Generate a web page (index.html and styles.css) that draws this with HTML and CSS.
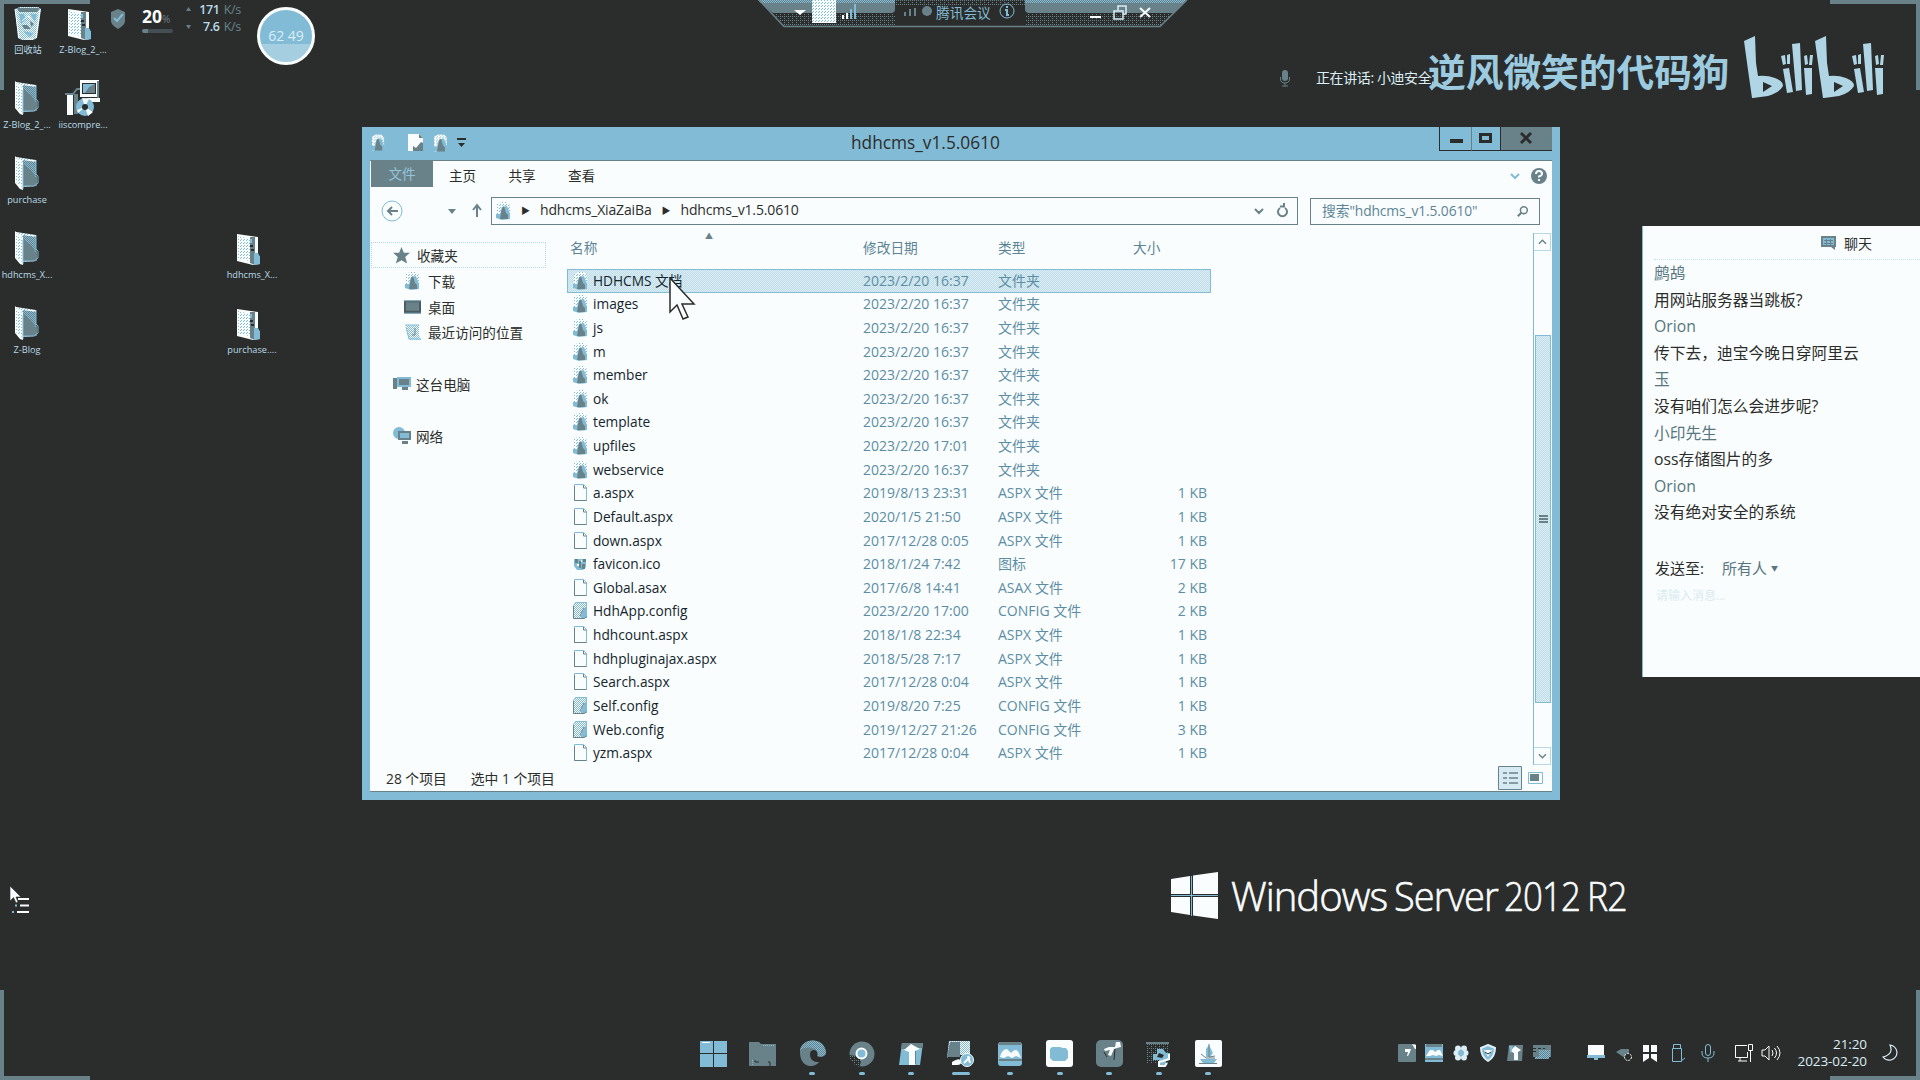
FILE: index.html
```html
<!DOCTYPE html>
<html lang="zh-CN">
<head>
<meta charset="utf-8">
<title>hdhcms_v1.5.0610</title>
<link rel="stylesheet" href="styles.css">
</head>
<body>
<svg width="0" height="0" class="defs">
  <defs>
    <pattern id="dots" width="2" height="2" patternUnits="userSpaceOnUse"><path fill="#82bbd5" d="M0 0h2v2H0z"/><path fill="#fafdfd" d="M0 0h1v1H0zM1 1h1v1H1z"/></pattern>
    <pattern id="light" width="3" height="3" patternUnits="userSpaceOnUse"><path fill="#fafdfd" d="M0 0h3v3H0z"/><path fill="#82bbd5" d="M0 0h1v1H0zM1 2h1v1H1z"/></pattern>
    <pattern id="deep" width="2" height="2" patternUnits="userSpaceOnUse"><path fill="#69828a" d="M0 0h2v2H0z"/><path fill="#82bbd5" d="M0 0h1v1H0zM1 1h1v1H1z"/></pattern>
    <pattern id="haze" width="4" height="4" patternUnits="userSpaceOnUse"><path fill="#2b2d2c" d="M0 0h4v4H0z"/><path fill="#69828a" d="M0 0h1v1H0zM2 2h1v1H2zM2 0h1v1H2z"/></pattern>
  </defs>
  <symbol id="folder" viewBox="0 0 24 34">
    <path fill="url(#light)" d="M1 1l20 3v26l-14 1-6-5z"/>
    <path fill="#69828a" d="M8 8q8 0 11 8l3 4v10H8z"/><path fill="url(#deep)" d="M8 4l13 2v16l-5-8-8-6z"/>
    <path fill="#fafdfd" d="M0 0l8 8v26l-3-1-5-6z"/><path fill="url(#light)" d="M1 2l6 7v22l-6-5z"/>
    <path fill="none" stroke="#82bbd5" d="M8 33V9M8 30h11l4-3v-7l-2-2V4"/>
  </symbol>
  <symbol id="zip" viewBox="0 0 24 32">
    <path fill="#fafdfd" d="M0 0l21 3v17l2 3v7l-7 1L0 27z"/><path fill="url(#light)" d="M1 2l12 3v22L1 25z"/>
    <path fill="#69828a" d="M13 3h5v28l-5-2z"/><path fill="#82bbd5" d="M17 19h4l2 4v7l-6 1zM13 5h2v4h-2z"/><path fill="#2b2d2c" d="M13 11h3v2h-3zM14 15h3v2h-3z"/>
  </symbol>
  <symbol id="fold" viewBox="0 0 15 18">
    <path fill="url(#light)" d="M1 2l4-2h6l3 3v11l-3 3H1z"/><path fill="#82bbd5" d="M0 12h4l2-7 5-1 3 8v5l-8 1-6-2z"/>
    <path fill="#69828a" d="M4 17l2-11 2-2 2 7 2 2v4z"/>
  </symbol>
  <symbol id="page" viewBox="0 0 15 18">
    <path fill="#fafdfd" stroke="#82bbd5" d="M1.500 .5h9l3 3v13h-12z"/><path fill="none" stroke="#69828a" d="M1.500 2v14.500h12M10.500 1v3h3"/>
  </symbol>
  <symbol id="conf" viewBox="0 0 15 18">
    <path fill="url(#dots)" stroke="#82bbd5" d="M2.500 .5h11v14l-2 2h-11v-13z"/><path fill="#82bbd5" d="M8 14l4-9h2v11H8z"/><path fill="none" stroke="#69828a" d="M.5 4v12.500h11l2-2M7 14l4-8"/>
  </symbol>
</svg>

<main class="desktop">
  <i class="corner tl"></i><i class="corner tr"></i><i class="corner bl"></i><i class="corner br"></i>

  <figure class="shortcut bin"><svg width="28" height="34" viewBox="0 0 28 34"><path fill="url(#dots)" d="M1 2l5-2h18l3 2-4 29-4 2H8l-4-2z"/><path fill="#69828a" d="M3 1h23l-3 4H5zM8 18h5l4 4h-7zM16 14l4 3-3 3z"/><path fill="#82bbd5" d="M5 7h5l2 6-5 4zM16 7h7l-2 8zM9 24l10 2-3 4z"/><path stroke="#fafdfd" fill="none" d="M1 2l4 29M26 3l-4 28M8 14l6-5 4 5M11 32h8"/></svg><figcaption>回收站</figcaption></figure>
  <figure class="shortcut s2"><svg width="24" height="32"><use href="#zip"/></svg><figcaption>Z-Blog_2_...</figcaption></figure>
  <figure class="shortcut s3"><svg width="24" height="34"><use href="#folder"/></svg><figcaption>Z-Blog_2_...</figcaption></figure>
  <figure class="shortcut s4"><svg width="36" height="37" viewBox="0 0 36 37"><path fill="#fafdfd" d="M15 0h19v17H15zM2 15h6v20H2zM20 18h15v4H22z"/><path fill="#2b2d2c" d="M17 3h14v11H17z"/><path fill="#82bbd5" d="M18 4h12v9H18z"/><path fill="#69828a" d="M24 7l6-3v9H20zM32 1h2v17h-2zM9 14h4v20H9z"/><path fill="none" stroke="#69828a" stroke-width="2" d="M0 14h8l4-5h3"/><circle cx="20" cy="27" r="9" fill="#82bbd5"/><path fill="#fafdfd" d="M20 27l-3-9 7 1zM20 27l8 5-5 4zM20 27l-8 3 1 3z"/><circle cx="20" cy="27" r="3" fill="#2b2d2c"/></svg><figcaption>iiscompre...</figcaption></figure>
  <figure class="shortcut s5"><svg width="24" height="34"><use href="#folder"/></svg><figcaption>purchase</figcaption></figure>
  <figure class="shortcut s6"><svg width="24" height="34"><use href="#folder"/></svg><figcaption>hdhcms_X...</figcaption></figure>
  <figure class="shortcut s7"><svg width="24" height="34"><use href="#folder"/></svg><figcaption>Z-Blog</figcaption></figure>
  <figure class="shortcut s8"><svg width="24" height="32"><use href="#zip"/></svg><figcaption>hdhcms_X...</figcaption></figure>
  <figure class="shortcut s9"><svg width="24" height="32"><use href="#zip"/></svg><figcaption>purchase....</figcaption></figure>

  <section class="monitor">
    <svg width="16" height="20" viewBox="0 0 16 20"><path fill="#69828a" d="M8 0l7 3v9q0 4-7 8-7-4-7-8V3z"/><path fill="none" stroke="#82bbd5" stroke-width="2" d="M4 9l3 3 6-7"/></svg>
    <div class="cpu"><p><b>20</b><small>%</small></p><i></i></div>
    <div class="net"><p><i>▲</i><b>171</b> <span>K/s</span></p><p><i>▼</i><b>7.6</b> <span>K/s</span></p></div>
    <div class="ball">62 49</div>
  </section>

  <header class="meeting">
    <svg width="430" height="28" viewBox="0 0 430 28">
      <path fill="#69828a" d="M0 0h137v9q0 4-4 4H15zM267 0h162l-13 13H271q-4 0-4-4z"/>
      <path fill="url(#deep)" d="M0 0h137v3H3zM267 0h162l-3 3H267z"/>
      <path fill="url(#haze)" d="M15 13h123v12H26zM267 13h149l-13 12H267zM138 0h129v6H138z"/>
      <path fill="none" stroke="#69828a" stroke-width="1.500" d="M1 0l25 26.500h376L429 0"/>
      <path fill="#fafdfd" d="M36 10h12l-6 5z"/><path fill="url(#light)" d="M54 0h24v23H54z"/>
      <path stroke="#fafdfd" stroke-width="2" d="M85 19v-4M89 19v-6"/><path stroke="#82bbd5" stroke-width="2" d="M93 19V9M97 19V4"/>
      <path stroke="#69828a" stroke-width="2" d="M147 16v-4M152 16V9M157 16V8"/><circle cx="169" cy="11" r="5" fill="#69828a"/>
      <circle cx="249" cy="11" r="7" fill="none" stroke="#82bbd5"/><path fill="none" stroke="#82bbd5" stroke-width="2" d="M249 6v2M247 10h2v5h2"/>
      <path stroke="#fafdfd" stroke-width="2" fill="none" d="M332 17h11M382 8l10 9M392 8l-10 9"/><path stroke="#dceef5" stroke-width="1.500" fill="none" d="M356 11h9v8h-9zM360 10V6h8v8h-3"/>
    </svg><span>腾讯会议</span>
  </header>

  <p class="speaking"><svg width="10" height="17" viewBox="0 0 10 17"><rect x="2" width="6" height="11" rx="3" fill="#69828a"/><path fill="none" stroke="#69828a" d="M.5 7v2q0 4 4.500 4t4.500-4V7M5 13v3M2 16h6"/></svg>正在讲话: 小迪安全;</p>
  <p class="watermark">逆风微笑的代码狗</p>
  <svg class="bili" width="142" height="62" viewBox="0 0 142 62">
    <g id="half" fill="#b0d5e4">
      <path fill-rule="evenodd" d="M0 5L11 0l1 27 2 13q9-1 17 2 8 3 8 8-4 7-15 10l-15 2H8L4 34zM19 46v10l9-6z"/>
      <path d="M48 8l8-1 2 47-6 1zM37 20l4-1 1 9-3 1zM43 19l3-1 0 10-3 0zM60 20l3-1 1 9-3 1zM66 19l3 0-1 10-3 0zM39 33l6-1 4 24-6 1zM60 32h8l0 26-6 1z"/>
    </g><use href="#half" x="71"/>
  </svg>

  <section class="window">
    <header class="titlebar">
      <div class="quick"><svg width="14" height="18"><use href="#fold"/></svg><svg width="16" height="18" viewBox="0 0 16 18"><path fill="#fafdfd" d="M0 0h11l4 4v6l-3 7H0z"/><path fill="#69828a" d="M5 12l3 2 5-6 2 1v8H5zM11 0v4h4z"/></svg><svg width="15" height="19"><use href="#fold"/></svg><svg width="9" height="10" viewBox="0 0 9 10"><path fill="#2b2d2c" d="M0 0h9v2H0zM1 5h7L4.500 9z"/></svg></div>
      <h1>hdhcms_v1.5.0610</h1>
      <div class="controls"><span class="min"><svg width="32" height="23"><path fill="#2b2d2c" d="M10 12h13v4H10z"/></svg></span><span class="max"><svg width="28" height="23"><path fill="none" stroke="#2b2d2c" stroke-width="3" d="M8.500 7.500h10v7h-10z"/></svg></span><span class="close"><svg width="52" height="23"><path stroke="#2b2d2c" stroke-width="3" d="M20 6l10 10M30 6L20 16"/></svg></span></div>
    </header>
    <div class="client">
      <nav class="ribbon"><b>文件</b><span>主页</span><span>共享</span><span>查看</span><svg width="46" height="18" viewBox="0 0 46 18"><path fill="none" stroke="#82bbd5" stroke-width="2" d="M9 7l4 4 4-4"/><circle cx="37" cy="9" r="8" fill="#69828a"/><path fill="none" stroke="#fafdfd" stroke-width="2" d="M34 7q0-3 3-3t3 2.500q0 2-3 3v1M37 12v2"/></svg></nav>
      <div class="navbar">
        <svg class="navs" width="109" height="28" viewBox="0 0 109 28"><circle cx="11" cy="14" r="10" fill="none" stroke="#82bbd5"/><path fill="none" stroke="#69828a" stroke-width="2" d="M17 14H7M11 10l-4 4 4 4"/><path fill="#69828a" d="M67 12h8l-4 5z"/><path fill="none" stroke="#69828a" stroke-width="2" d="M96 20V9M92 13l4-5 4 5"/></svg>
        <div class="address"><svg width="15" height="20"><use href="#fold"/></svg><i>▶</i><span>hdhcms_XiaZaiBa</span><i>▶</i><span>hdhcms_v1.5.0610</span><svg class="refresh" width="40" height="18" viewBox="0 0 40 18"><path fill="none" stroke="#69828a" stroke-width="2" d="M3 7l4 4 4-4M33 6a4.500 4.500 0 1 1-5 0M28 4.500h4V1"/></svg></div>
        <div class="search"><span>搜索"hdhcms_v1.5.0610"</span><svg width="12" height="13" viewBox="0 0 14 14"><circle cx="8" cy="5.500" r="4" fill="none" stroke="#69828a" stroke-width="1.800"/><path stroke="#69828a" stroke-width="2.500" d="M5 8.500l-4 4"/></svg></div>
      </div>
      <div class="body">
        <aside class="tree">
          <p class="root hot"><svg width="17" height="17" viewBox="0 0 18 18"><path fill="#69828a" d="M9 0l2.500 6H18l-5 4.500 2 7L9 14l-6 3.500 2-7L0 6h6.500z"/></svg>收藏夹</p>
          <p><svg width="17" height="18"><use href="#fold"/></svg>下载</p>
          <p><svg width="17" height="14" viewBox="0 0 18 14"><path fill="#4a5a5f" d="M0 0h18v14H0z"/><path fill="#69828a" d="M2 2h14v9H2z"/><path fill="#82bbd5" d="M0 0h18v1H0zM0 13h18v1H0z"/></svg>桌面</p>
          <p><svg width="17" height="17" viewBox="0 0 17 17"><path fill="url(#dots)" d="M2 1h13v10l2 5H5L3 8z"/><path fill="none" stroke="#82bbd5" d="M1 1h14M2 3l3 12h12"/><path fill="none" stroke="#69828a" d="M11 4v7H8"/></svg>最近访问的位置</p>
          <p class="root gap"><svg width="18" height="16" viewBox="0 0 18 16"><path fill="#82bbd5" d="M4 1h14v10H4z"/><path fill="#69828a" d="M6 3h10v6H6zM9 11h6v3H9zM0 2h4v11H0z"/></svg>这台电脑</p>
          <p class="root gap"><svg width="18" height="18" viewBox="0 0 18 18"><circle cx="6" cy="6" r="6" fill="#82bbd5"/><path fill="#69828a" d="M5 4h13v9H5zM9 14h6v3H9z"/><path fill="#82bbd5" d="M7 6h9v5H7z"/></svg>网络</p>
        </aside>
        <div class="list">
          <div class="head"><span>名称</span><span>修改日期</span><span>类型</span><span class="size">大小</span><i>▲</i></div>
          <div class="row on"><svg><use href="#fold"/></svg><b>HDHCMS 文档</b><span>2023/2/20 16:37</span><span>文件夹</span><em></em></div>
          <div class="row"><svg><use href="#fold"/></svg><b>images</b><span>2023/2/20 16:37</span><span>文件夹</span><em></em></div>
          <div class="row"><svg><use href="#fold"/></svg><b>js</b><span>2023/2/20 16:37</span><span>文件夹</span><em></em></div>
          <div class="row"><svg><use href="#fold"/></svg><b>m</b><span>2023/2/20 16:37</span><span>文件夹</span><em></em></div>
          <div class="row"><svg><use href="#fold"/></svg><b>member</b><span>2023/2/20 16:37</span><span>文件夹</span><em></em></div>
          <div class="row"><svg><use href="#fold"/></svg><b>ok</b><span>2023/2/20 16:37</span><span>文件夹</span><em></em></div>
          <div class="row"><svg><use href="#fold"/></svg><b>template</b><span>2023/2/20 16:37</span><span>文件夹</span><em></em></div>
          <div class="row"><svg><use href="#fold"/></svg><b>upfiles</b><span>2023/2/20 17:01</span><span>文件夹</span><em></em></div>
          <div class="row"><svg><use href="#fold"/></svg><b>webservice</b><span>2023/2/20 16:37</span><span>文件夹</span><em></em></div>
          <div class="row"><svg><use href="#page"/></svg><b>a.aspx</b><span>2019/8/13 23:31</span><span>ASPX 文件</span><em>1 KB</em></div>
          <div class="row"><svg><use href="#page"/></svg><b>Default.aspx</b><span>2020/1/5 21:50</span><span>ASPX 文件</span><em>1 KB</em></div>
          <div class="row"><svg><use href="#page"/></svg><b>down.aspx</b><span>2017/12/28 0:05</span><span>ASPX 文件</span><em>1 KB</em></div>
          <div class="row"><svg viewBox="0 0 15 18"><path fill="#82bbd5" d="M1 4h12v8l-3 3H4l-3-4z"/><path fill="#69828a" d="M2 4h3v4H2zM6 6h2v7H6zM10 4h3v3h-3zM9 9h3v5H9z"/><path fill="#fafdfd" d="M4 9h2v2H4zM8 5h1v2H8z"/></svg><b>favicon.ico</b><span>2018/1/24 7:42</span><span>图标</span><em>17 KB</em></div>
          <div class="row"><svg><use href="#page"/></svg><b>Global.asax</b><span>2017/6/8 14:41</span><span>ASAX 文件</span><em>2 KB</em></div>
          <div class="row"><svg><use href="#conf"/></svg><b>HdhApp.config</b><span>2023/2/20 17:00</span><span>CONFIG 文件</span><em>2 KB</em></div>
          <div class="row"><svg><use href="#page"/></svg><b>hdhcount.aspx</b><span>2018/1/8 22:34</span><span>ASPX 文件</span><em>1 KB</em></div>
          <div class="row"><svg><use href="#page"/></svg><b>hdhpluginajax.aspx</b><span>2018/5/28 7:17</span><span>ASPX 文件</span><em>1 KB</em></div>
          <div class="row"><svg><use href="#page"/></svg><b>Search.aspx</b><span>2017/12/28 0:04</span><span>ASPX 文件</span><em>1 KB</em></div>
          <div class="row"><svg><use href="#conf"/></svg><b>Self.config</b><span>2019/8/20 7:25</span><span>CONFIG 文件</span><em>1 KB</em></div>
          <div class="row"><svg><use href="#conf"/></svg><b>Web.config</b><span>2019/12/27 21:26</span><span>CONFIG 文件</span><em>3 KB</em></div>
          <div class="row"><svg><use href="#page"/></svg><b>yzm.aspx</b><span>2017/12/28 0:04</span><span>ASPX 文件</span><em>1 KB</em></div>
        </div>
        <div class="scroll"><svg width="17" height="18" viewBox="0 0 17 18"><path fill="none" stroke="#69828a" stroke-width="1.600" d="M5 11l4-4 4 4"/></svg><div class="track"><i><svg width="9" height="8" viewBox="0 0 9 8"><path fill="#69828a" d="M0 0h9v2H0zM0 3h9v2H0zM0 6h9v2H0z"/></svg></i></div><svg width="17" height="18" viewBox="0 0 17 18"><path fill="none" stroke="#69828a" stroke-width="1.600" d="M5 7l4 4 4-4"/></svg></div>
      </div>
      <footer class="status"><span>28 个项目</span><span>选中 1 个项目</span><svg width="46" height="24" viewBox="0 0 46 24"><path fill="#d5eaf2" stroke="#69828a" d="M.5 .5h23v23H.5z"/><path stroke="#69828a" stroke-width="1.500" stroke-dasharray="4 2 9" d="M5 7h15M5 12h15M5 17h15"/><path fill="none" stroke="#82bbd5" d="M30.500 6.500h14v11h-14z"/><path fill="#69828a" d="M32 8h9v7h-9z"/></svg></footer>
    </div>
  </section>
  <svg class="pointer" width="28" height="44" viewBox="0 0 28 44"><path fill="#fafdfd" stroke="#2b2d2c" stroke-width="1.500" d="M1 1v34l7-7 6 14 5-2-6-13h12z"/></svg>

  <aside class="chat">
    <h2><svg width="16" height="15" viewBox="0 0 16 15"><path fill="#69828a" d="M0 1h15v11h-1v3l-4-3H0z"/><path fill="#82bbd5" d="M2 3h11v7H2z"/><path stroke="#69828a" d="M3 5.500h9M3 8.500h9M5.500 4v6M9.500 4v6"/></svg>聊天</h2>
    <dl>
      <dt>鹧鸪</dt><dd>用网站服务器当跳板?</dd>
      <dt>Orion</dt><dd>传下去，迪宝今晚日穿阿里云</dd>
      <dt>玉</dt><dd>没有咱们怎么会进步呢?</dd>
      <dt>小印先生</dt><dd>oss存储图片的多</dd>
      <dt>Orion</dt><dd>没有绝对安全的系统</dd>
    </dl>
    <p class="to">发送至:<span>所有人<i>▼</i></span></p>
    <p class="hint">请输入消息...</p>
  </aside>

  <div class="brand"><svg width="48" height="48" viewBox="0 0 48 48"><path fill="#fafdfd" d="M0 7l19-3v18H0zM22 3.500L47 0v22H22zM0 25h19v18L0 40zM22 25h25v22l-25-3.500z"/><path fill="none" stroke="#82bbd5" d="M0 23.500h47M20.500 4v40"/></svg><span class="w1">Windows</span><span class="w2">Server</span><span class="w3">2012</span><span class="w4">R2</span></div>

  <svg class="edge" width="30" height="32" viewBox="0 0 30 32"><path stroke="#fafdfd" stroke-width="2" d="M8 13h11M10 19.500h9M7 26h12"/><path fill="#82bbd5" d="M5 18.500h2v2H5zM2 25h2v2H2z"/><path fill="#fafdfd" stroke="#2b2d2c" stroke-width=".6" d="M0 0v15l3.500-3.500L6 17l2-1-2-5h5z"/></svg>

  <footer class="dock">
    <span><svg viewBox="0 0 27 27"><path fill="#82bbd5" d="M0 1h13v12H0zM14 1h13v12H14zM0 14h13v13H0zM14 14h13v13H14z"/><path fill="#fafdfd" d="M2 2h8v1H2z"/></svg></span>
    <span><svg viewBox="0 0 27 27"><path fill="#69828a" d="M0 2h10l2 2h15v22H0z"/><path stroke="#82bbd5" stroke-dasharray="1 1" d="M14 5.500h12M3.500 20v6"/><path fill="none" stroke="#2b2d2c" d="M6 20v2h4M19 22h2v4"/></svg></span>
    <span><svg viewBox="0 0 27 27"><path fill="#69828a" d="M1 10C4-3 25-3 27 12c0 5-6 6-9 4 2-4-2-8-6-5-3 5 1 12 8 11-5 7-20 6-19-12z"/><path fill="url(#deep)" d="M1 10C4-3 25-3 27 12c0 4-4 5-8 4 1-8-9-11-18-6z"/></svg><i></i></span>
    <span><svg viewBox="0 0 27 27"><circle cx="14" cy="14" r="12.500" fill="#69828a"/><path fill="url(#haze)" d="M1 15l7 1 5 4-1 7Q3 25 1 15z"/><circle cx="13.500" cy="13.500" r="5" fill="#82bbd5" stroke="#fafdfd" stroke-width="2"/></svg><i></i></span>
    <span><svg viewBox="0 0 27 27"><path fill="#82bbd5" d="M4 3h21l-3 22H1z"/><path fill="#69828a" d="M4 3h21l-1 5h-6v16h-7V9H3z"/><path fill="#fafdfd" d="M13 4l9 5-5 2v14h-6V12l-5-2z"/></svg><i></i></span>
    <span><svg viewBox="0 0 27 27"><path fill="url(#dots)" d="M2 1h21v14H3L0 18z"/><path fill="#69828a" d="M3 2h10v15H0z"/><path fill="#fafdfd" d="M5 22q8-5 9-1t-4 4H5z"/><circle cx="20" cy="20" r="6.500" fill="#82bbd5" stroke="#fafdfd"/><path fill="none" stroke="#fafdfd" stroke-width="2" d="M17 23l6-6M23 23l-2-7"/></svg><i class="long"></i></span>
    <span><svg viewBox="0 0 27 27"><rect x="1" y="2" width="24" height="24" rx="3" fill="#82bbd5"/><path fill="#69828a" d="M2 2h22v3H2zM2 19h23v2H2z"/><path fill="#fafdfd" d="M3 17q2-8 7-8l4 4q5-6 8 0l2 5-5-2-4 2-4-2-4 2z"/></svg><i></i></span>
    <span><svg viewBox="0 0 27 27"><rect width="27" height="27" rx="3" fill="#fafdfd"/><path fill="#82bbd5" d="M6 7h8l3 1h3l2 3v7l-3 3H7l-3-3V9z"/></svg><i></i></span>
    <span><svg viewBox="0 0 27 27"><rect width="27" height="27" rx="5" fill="#69828a"/><path fill="#fafdfd" d="M8 9l5-2h6l1-5h4l1 5-4 1-3 1-3 7-3-1 2-5-5 1z"/><path fill="none" stroke="#2b2d2c" d="M8 12l3 5M19 9l-1 11"/></svg><i></i></span>
    <span><svg viewBox="0 0 27 27"><path fill="url(#haze)" d="M1 2h23v21H1z"/><path fill="#69828a" d="M1 2h23v2H1z"/><path fill="#82bbd5" d="M12 9h6l3 4h4v7l-4 1v5h-7v-6H8v-6h4z"/><path fill="none" stroke="#fafdfd" stroke-width="2" d="M24 14v5l-6 2-4 1v4h6l2-3"/><path fill="#2b2d2c" d="M14 13l5 2-2 3-5-1z"/></svg><i></i></span>
    <span><svg viewBox="0 0 27 27"><rect width="27" height="27" rx="2" fill="#fafdfd"/><path fill="#82bbd5" d="M14 5l4 8-3 4h-4V9zM5 19h17l-3 4H8z"/><path fill="none" stroke="#69828a" d="M14 4v13l6-1M6 14l5 4h9M4 23.500h18"/></svg><i></i></span>
  </footer>

  <section class="tray">
    <svg class="t1" viewBox="0 0 18 18"><rect width="18" height="18" rx="1" fill="#69828a"/><path fill="#fafdfd" d="M7 5h6l-1 3-2 4H9l1-4H7zM14 0l4 1v4h-1z"/></svg>
    <svg class="t2" viewBox="0 0 18 18"><path fill="#82bbd5" d="M0 0h18v18H0z"/><path fill="#69828a" d="M1 0h16v3H1zM0 14h18v2H0z"/><path fill="#fafdfd" d="M1 12l4-6h3l2 2 3-2h2l3 6-4-1-3 1-3-1-3 1z"/></svg>
    <svg class="t3" viewBox="0 0 18 18"><g fill="#dceef5"><circle cx="6" cy="4.500" r="3"/><circle cx="12" cy="4.500" r="3"/><circle cx="4.500" cy="9" r="3"/><circle cx="13.500" cy="9" r="3"/><circle cx="6" cy="13.500" r="3"/><circle cx="12" cy="13.500" r="3"/></g><circle cx="9" cy="9" r="3" fill="#82bbd5"/></svg>
    <svg class="t4" viewBox="0 0 18 18"><path fill="#82bbd5" stroke="#dceef5" stroke-width="2" d="M9 1l7 3q0 9-7 13Q2 13 2 4z"/><path fill="#fafdfd" d="M5 6h8l-4 7z"/><path stroke="#2b2d2c" fill="none" d="M6 8l3 2 3-2"/></svg>
    <svg class="t5" viewBox="0 0 18 18"><path fill="#69828a" d="M3 1h14l-1 16H1z"/><path fill="#fafdfd" d="M9 2l6 4-3 2v8H8V9L4 7z"/><path fill="#82bbd5" d="M3 2h4l-2 8z"/></svg>
    <svg class="t6" viewBox="0 0 18 18"><path fill="#69828a" d="M0 1h18v12H0z"/><path fill="url(#deep)" d="M6 6h11v7H6zM2 13h14v2H2z"/><path stroke="#2b2d2c" stroke-dasharray="3 2" d="M0 4.500h12M0 7.500h5"/></svg>
    <svg class="t7" viewBox="0 0 18 18"><path fill="#fafdfd" d="M1 1h16v10H1z"/><path fill="#82bbd5" d="M0 11h18v3H0zM7 14h4v2H7z"/></svg>
    <svg class="t8" viewBox="0 0 18 18"><path fill="#69828a" d="M1 8l5-3h8v5l-4 4z"/><circle cx="13" cy="13" r="3.500" fill="#2b2d2c" stroke="#fafdfd" stroke-dasharray="2 1"/></svg>
    <svg class="t9" viewBox="0 0 18 18"><path fill="#fafdfd" d="M2 1h6v7H2zM10 1h6v7h-6zM2 10h6v4l-6 4zM10 10h6v8l-6-4z"/></svg>
    <svg class="t10" viewBox="0 0 18 18"><path fill="none" stroke="#82bbd5" d="M3.500 4.500h9v13h-9zM4.500 4V.5h7V4M12 17l4-3"/></svg>
    <svg class="t11" viewBox="0 0 18 18"><rect x="6.500" y=".5" width="5" height="11" rx="2.500" fill="none" stroke="#82bbd5"/><path fill="none" stroke="#82bbd5" d="M3 7v2q0 5 6 5t6-5V7M9 14v4"/></svg>
    <svg class="t12" viewBox="0 0 20 18"><path fill="none" stroke="#fafdfd" d="M14 1.500H2.500v12h12V8M5 17h9M7 14v3M15.500.5h4v6h-4zM17.500 7v11"/></svg>
    <svg class="t13" viewBox="0 0 20 18"><path fill="none" stroke="#fafdfd" d="M1 6v6h3l4 4V2L4 6zM11 6q2 3 0 6M13.500 4q4 5 0 10M16 2q6 7 0 14"/></svg>
    <time>21:20<br>2023-02-20</time>
    <svg class="t14" viewBox="0 0 18 18"><path fill="none" stroke="#dceef5" stroke-width="1.200" d="M9 1q4 9-7 12 3 4 8 3 6-2 6-8-1-6-7-7z"/></svg>
  </section>
</main>
</body>
</html>
```
FILE: styles.css
```css
:root { --ink: #2b2d2c; --slate: #69828a; --sky: #82bbd5; --paper: #fafdfd; }
* { box-sizing: border-box; margin: 0; padding: 0; }
body { background: var(--ink); overflow: hidden; font-family: "Open Sans", "Noto Sans CJK SC", sans-serif; font-size: 14px; color: var(--ink); }
svg { display: block; flex: none; }
.defs { position: absolute; }
i, em { font-style: normal; }
.desktop { position: relative; width: 1920px; height: 1080px; overflow: hidden; background: var(--ink); }

.corner { position: absolute; width: 90px; height: 90px; border: 0 solid var(--slate); }
.tl { left: 0; top: 0; border-width: 4px 0 0 4px; }
.tr { right: 0; top: 0; border-width: 4px 4px 0 0; }
.bl { left: 0; bottom: 0; border-width: 0 0 4px 4px; }
.br { right: 0; bottom: 0; border-width: 0 4px 4px 0; }

.shortcut { position: absolute; width: 76px; display: flex; flex-direction: column; align-items: center; gap: 4px; }
.shortcut figcaption { color: #b9dbe8; font-size: 9.200px; line-height: 12px; white-space: nowrap; }
.bin { left: -10px; top: 7px; gap: 3px; }
.s2 { left: 45px; top: 9px; gap: 3px; }
.s3 { left: -11px; top: 81px; }
.s4 { left: 45px; top: 80px; gap: 2px; }
.s5 { left: -11px; top: 156px; }
.s6 { left: -11px; top: 231px; }
.s7 { left: -11px; top: 306px; }
.s8 { left: 214px; top: 234px; gap: 3px; }
.s9 { left: 214px; top: 309px; gap: 3px; }
.s2 svg, .s8 svg, .s9 svg { margin-right: 6px; }

.monitor { position: absolute; left: 110px; top: 7px; display: flex; align-items: flex-start; color: var(--paper); }
.monitor > svg { margin-top: 2px; }
.cpu { width: 31px; margin-left: 16px; }
.cpu p { line-height: 18px; white-space: nowrap; }
.cpu b { font-size: 17.500px; }
.cpu small { font-size: 10px; color: var(--slate); }
.cpu > i { display: block; margin-top: 1px; height: 4px; background: linear-gradient(90deg, var(--slate) 6px, #434f53 0); border-radius: 2px; }
.net { width: 55px; margin: -6px 0 0 13px; font-size: 12.500px; line-height: 17px; letter-spacing: -.3px; color: var(--slate); }
.net p { display: flex; justify-content: flex-end; gap: 4px; }
.net b { font-weight: 600; color: #b9dbe8; }
.net i { font-size: 5px; margin-right: auto; }
.ball { width: 58px; height: 58px; margin-left: 16px; border: 3px solid var(--paper); border-radius: 50%; background: linear-gradient(var(--sky) 66%, #a5cfe1 66%); font-size: 14px; line-height: 51px; text-align: center; color: #dceef5; }

.meeting { position: absolute; left: 758px; top: 0; }
.meeting span { position: absolute; left: 178px; top: 3px; color: var(--sky); font-size: 13.700px; line-height: 19px; white-space: nowrap; }
.speaking { position: absolute; left: 1280px; top: 68px; display: flex; gap: 26px; align-items: center; line-height: 20px; font-size: 14px; letter-spacing: -.4px; color: #dceef5; white-space: nowrap; }
.watermark { position: absolute; left: 1428px; top: 44px; font-size: 37.700px; line-height: 56px; font-weight: 700; color: #9ccbe0; white-space: nowrap; }
.bili { position: absolute; left: 1744px; top: 36px; }

.window { position: absolute; left: 362px; top: 127px; width: 1198px; height: 673px; background: var(--sky); padding: 0 8px 8px; display: flex; flex-direction: column; }
.titlebar { height: 33px; display: grid; grid-template-columns: 481px auto 1fr; }
.titlebar h1 { font-size: 17.300px; line-height: 32px; font-weight: 400; }
.quick { display: flex; align-items: center; gap: 9px; padding-left: 1px; }
.quick svg:first-child { margin-right: 14px; }
.controls { display: flex; justify-self: end; height: 24px; }
.controls span { border-bottom: 1px solid var(--ink); }
.min { border-left: 1px solid var(--ink); border-right: 1px solid var(--slate); width: 33px; }
.max { width: 28px; }
.close { background: var(--slate); border-left: 1px solid var(--ink); width: 52px; }
.client { flex: 1; background: var(--paper); border-top: 1px solid var(--slate); border-bottom: 1px solid var(--slate); display: flex; flex-direction: column; }
.ribbon { height: 31px; display: flex; align-items: flex-start; line-height: 29px; font-size: 13.600px; padding-left: 1px; }
.ribbon b { width: 62px; height: 26px; line-height: 25px; text-align: center; background: var(--slate); color: #93c5db; font-weight: 400; margin-right: 16px; }
.ribbon span { width: 59.500px; }
.ribbon svg { margin: 6px 4px 0 auto; }
.navbar { height: 39px; display: flex; align-items: flex-start; padding: 5px 12px 0 11px; }
.navs { margin-right: 1px; }
.address { width: 807px; height: 28px; border: 1px solid var(--slate); display: flex; align-items: center; padding: 0 5px 0 4px; line-height: 26px; font-size: 14px; }
.address span { position: static; line-height: 24px; margin-bottom: 2px; letter-spacing: -.15px; }
.address i { width: 29px; text-align: center; font-size: 9px; }
.address span + i { width: 29px; }
.refresh { margin-left: auto; }
.search { width: 230px; height: 27px; margin: 1px 0 0 auto; border: 1px solid var(--slate); display: flex; align-items: center; justify-content: space-between; padding: 0 10px 0 11px; font-size: 13.800px; color: #5c8497; letter-spacing: -.1px; white-space: nowrap; }
.search span { margin-bottom: 2px; }
.body { flex: 1; display: flex; min-height: 0; }
.tree { width: 182px; padding: 11.500px 6px 0 1px; font-size: 13.600px; }
.tree p { height: 25.700px; display: flex; align-items: center; gap: 7px; padding-left: 33px; white-space: nowrap; }
.tree .root { padding-left: 22px; gap: 5px; }
.tree .hot { border: 1px dotted #b7d8e6; padding-left: 21px; gap: 7px; }
.tree .gap { margin-top: 26px; }
.list { width: 659px; padding-left: 15px; font-size: 13.700px; }
.head { position: relative; height: 38px; display: grid; grid-template-columns: 293px 135px 135px 1fr; padding: 4px 0 7px 3px; line-height: 26px; color: #5c8497; }
.head i { position: absolute; left: 138px; top: -2px; font-size: 8px; line-height: 14px; color: var(--slate); }
.row { height: 23.640px; display: grid; grid-template-columns: 20px 270px 135px 1fr 70px; align-items: center; padding: 0 4px 0 6px; line-height: 22px; color: #5c8da5; white-space: nowrap; }
.row svg { width: 15px; height: 18px; }
.row b { font-weight: 400; color: #14252d; }
.row span, .row em { font-size: 14px; }
.row em { text-align: right; }
.row.on { border: 1px solid var(--sky); padding: 0 3px 0 5px; background: repeating-conic-gradient(#bfdde9 0 25%, #dceef4 0 50%) 0 0 / 2px 2px; }
.scroll { width: 18px; margin: 2px 1px 0 auto; border-left: 1px solid var(--sky); display: flex; flex-direction: column; }
.scroll > svg { border: 1px solid #b7d8e6; border-left: 0; }
.track { flex: 1; padding: 84px 0 44px 1px; }
.track i { display: flex; height: 100%; align-items: center; justify-content: center; border: 1px solid var(--sky); background: repeating-conic-gradient(#bfdde9 0 25%, #dceef4 0 50%) 0 0 / 2px 2px; }
.status { height: 26px; display: flex; align-items: center; gap: 24px; padding: 0 8px 0 16px; font-size: 13.800px; }
.status svg { margin-left: auto; }
.pointer { position: absolute; left: 669px; top: 277px; }

.chat { position: absolute; left: 1642px; top: 226px; width: 278px; height: 451px; background: var(--paper); border-left: 1px solid var(--sky); padding-left: 11px; font-size: 15.750px; }
.chat h2 { height: 34px; display: flex; align-items: center; justify-content: flex-end; gap: 7px; padding-right: 48px; font-size: 14px; font-weight: 400; border-bottom: 1px dotted #c3dfea; }
.chat dt, .chat dd { height: 26.600px; line-height: 26px; white-space: nowrap; }
.chat dt { color: #587680; }
.to { margin-top: 28px; padding-left: 1px; font-size: 15px; line-height: 28px; }
.to span { margin-left: 18px; color: #587680; }
.to i { font-size: 7px; vertical-align: 3px; margin-left: 4px; }
.hint { padding-left: 2px; font-size: 12px; line-height: 26px; color: #d8ebf2; }

.brand { position: absolute; left: 1171px; top: 872px; display: flex; align-items: flex-start; color: var(--paper); font-size: 40px; font-weight: 300; line-height: 48px; letter-spacing: -1px; white-space: nowrap; -webkit-text-stroke: .6px var(--paper); }
.brand span { display: block; flex: none; transform-origin: 0 50%; }
.w1 { width: 163px; margin-left: 12px; }
.w2 { width: 110px; transform: scaleX(.95); }
.w3 { width: 83px; transform: scaleX(.87); }
.w4 { transform: scaleX(.89); }
.edge { position: absolute; left: 10px; top: 886px; }

.dock { position: absolute; left: 688.500px; top: 1040px; display: grid; grid-template-columns: repeat(11, 49.500px); }
.dock span { display: flex; flex-direction: column; align-items: center; gap: 5px; }
.dock svg { width: 27px; height: 27px; }
.dock i { width: 6px; height: 3px; border-radius: 2px; background: var(--sky); }
.dock .long { width: 18px; }
.tray { position: absolute; left: 1398px; top: 1032px; display: flex; align-items: center; gap: 9px; height: 42px; color: #dceef5; }
.tray svg { width: 18px; height: 18px; }
.tray .t7 { margin-left: 27px; }
.tray .t8, .tray .t10 { margin-left: 1px; }
.tray .t9 { margin-left: -1px; }
.tray .t11 { margin-left: 3px; }
.tray .t12 { width: 20px; margin-left: 7px; }
.tray .t13 { width: 20px; margin-left: -1px; }
.tray time { width: 78px; text-align: right; font-size: 13.500px; line-height: 17.500px; margin-left: -1px; letter-spacing: -.1px; }
.tray .t14 { margin-left: 5px; }
```
